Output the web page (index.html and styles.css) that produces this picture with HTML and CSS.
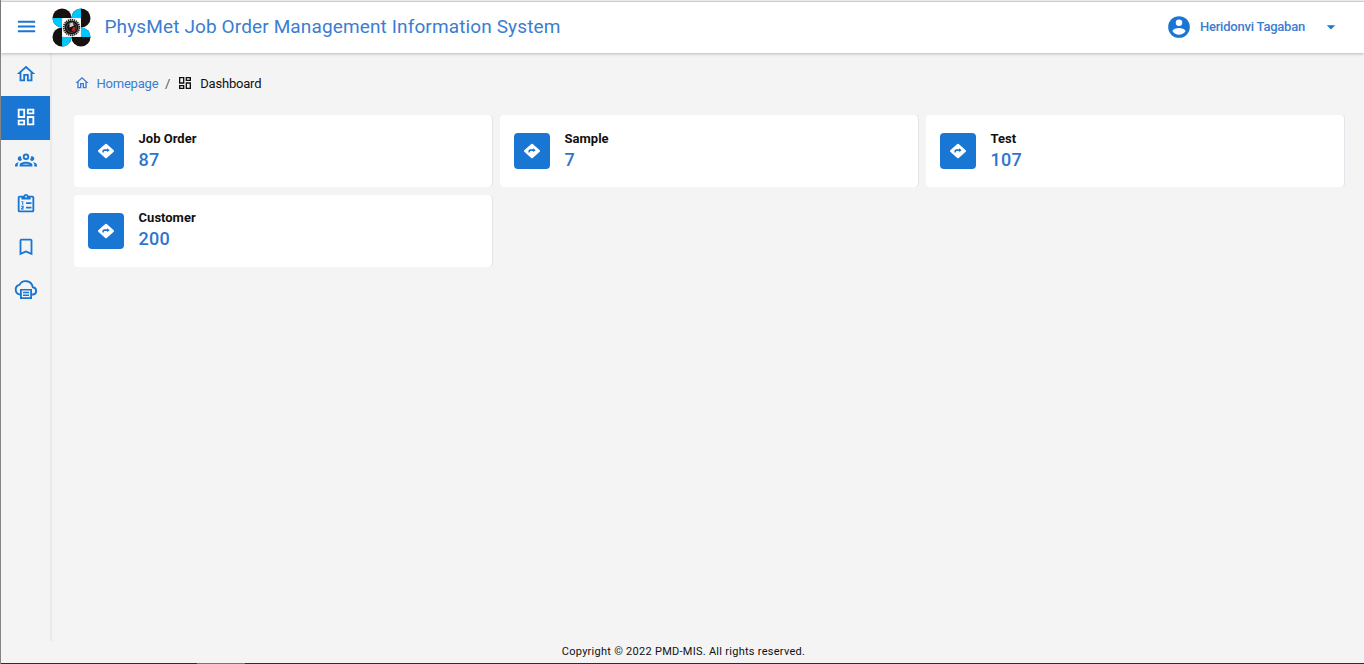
FILE: index.html
```html
<!DOCTYPE html>
<html lang="en">
<head>
<meta charset="utf-8">
<title>PhysMet Job Order Management Information System</title>
<link rel="stylesheet" href="styles.css">
</head>
<body>
<svg class="defs" aria-hidden="true">
  <symbol id="home" viewBox="0 0 24 24"><path d="M12 5.69L17 10.19V18H15V12H9V18H7V10.19L12 5.69M12 3L2 12H5V20H11V14H13V20H19V12H22"/></symbol>
  <symbol id="dash" viewBox="0 0 24 24"><path d="M19,5V7H15V5H19M9,5V11H5V5H9M19,13V19H15V13H19M9,17V19H5V17H9M21,3H13V9H21V3M11,3H3V13H11V3M21,11H13V21H21V11M11,15H3V21H11V15Z"/></symbol>
  <symbol id="go" viewBox="0 0 24 24"><path fill-rule="evenodd" d="M13.4 13.4V12H10Q9 12 9 14H7.2Q6.8 9.8 10 9.8H13.4V8.4L17 11ZM22.3 11.1L13 2.6Q12 1.8 11 2.6L1.7 11.1Q.9 12 1.7 12.9L11 21.4Q12 22.2 13 21.4L22.3 12.9Q23.1 12 22.3 11.1Z"/></symbol>
</svg>
<div class="app">
  <header class="topbar">
    <svg class="menu" viewBox="0 0 24 24"><path d="M3,6H21V8H3V6M3,11H21V13H3V11M3,16H21V18H3V16Z"/></svg>
    <svg class="logo" viewBox="0 0 40 40">
      <g fill="#17120f"><circle cx="10.3" cy="10.3" r="9.8"/><circle cx="29.7" cy="10.3" r="9.8"/><circle cx="10.3" cy="29.7" r="9.8"/><circle cx="29.7" cy="29.7" r="9.8"/></g>
      <g fill="#00c8ff"><path d="M10.3 10.3H.5A9.8 9.8 0 0 0 10.3 20.1Z"/><path d="M29.7 10.3V.5A9.8 9.8 0 0 0 19.9 10.3Z"/><path d="M29.7 29.7H39.5A9.8 9.8 0 0 0 29.7 19.9Z"/><path d="M10.3 29.7V39.5A9.8 9.8 0 0 0 20.1 29.7Z"/></g>
      <path fill="#fff" d="M10.3 10.3H29.7V29.7H10.3Z"/>
      <circle cx="20" cy="20" r="8" fill="none" stroke="#222" stroke-width="1.8" stroke-dasharray="1.4 .7"/>
      <circle cx="20" cy="20" r="7.2" fill="#17120f"/>
      <circle cx="20" cy="20" r="5" fill="none" stroke="#666" stroke-width=".7"/>
      <path fill="#ccc" d="M18 16l3-1.5 1.5 3.5-2 1-2.5 1Z"/><path fill="#c91d2b" d="M22 19l2 1-1 4-3-1Z"/>
    </svg>
    <h1 class="title">PhysMet Job Order Management Information System</h1>
    <div class="user">
      <svg class="avatar" viewBox="0 0 24 24"><path d="M12,19.2C9.5,19.2 7.29,17.92 6,16C6.03,14 10,12.9 12,12.9C14,12.9 17.97,14 18,16C16.71,17.92 14.5,19.2 12,19.2M12,5A3,3 0 0,1 15,8A3,3 0 0,1 12,11A3,3 0 0,1 9,8A3,3 0 0,1 12,5M12,2A10,10 0 1,0 22,12A10,10 0 0,0 12,2Z"/></svg>
      <span class="username">Heridonvi Tagaban</span>
      <svg class="caret" viewBox="0 0 24 24"><path d="M7,10L12,15L17,10H7Z"/></svg>
    </div>
  </header>
  <div class="body">
    <nav class="side">
      <a class="item"><svg><use href="#home"/></svg></a>
      <a class="item active"><svg><use href="#dash"/></svg></a>
      <a class="item"><svg viewBox="0 0 24 24"><path fill-rule="evenodd" d="M12 5A3.5 3.5 0 1 0 12 12A3.5 3.5 0 1 0 12 5M12 7A1.5 1.5 0 1 1 12 10A1.5 1.5 0 1 1 12 7M5.5 8A2.5 2.5 0 1 0 7.6 11.8C6.9 10.9 6.5 9.7 6.5 8.2A2.5 2.5 0 0 0 5.5 8M18.5 8A2.5 2.5 0 1 1 16.4 11.8C17.1 10.9 17.5 9.7 17.5 8.2A2.5 2.5 0 0 1 18.5 8M12 14C9.66 14 5 15.17 5 17.5V19H19V17.5C19 15.17 14.34 14 12 14M4.7 14.5C2.8 14.8 0 15.7 0 17.5V19H3V17.1C3 16.1 3.7 15.2 4.7 14.5M19.3 14.5C20.3 15.2 21 16.1 21 17.1V19H24V17.5C24 15.7 21.2 14.8 19.3 14.5M12 16C13.5 16 15.2 16.5 16.2 17H7.8C8.8 16.5 10.5 16 12 16Z"/></svg></a>
      <a class="item"><svg viewBox="0 0 24 24"><path fill-rule="evenodd" d="M19 3H14.8A3 3 0 0 0 9.2 3H5A2 2 0 0 0 3 5V19A2 2 0 0 0 5 21H19A2 2 0 0 0 21 19V5A2 2 0 0 0 19 3M12 3A1 1 0 1 1 12 5A1 1 0 1 1 12 3M5 5H7V7H17V5H19V19H5Z"/><path d="M12 10H18V12H12ZM12 15H18V17H12ZM7 9H9V13H8V10H7ZM6.5 14H9.5V16L8 17H9.5V18H6.5V17L8.5 15H6.5Z"/></svg></a>
      <a class="item"><svg viewBox="0 0 24 24"><path d="M17,18L12,15.82L7,18V5H17M17,3H7A2,2 0 0,0 5,5V21L12,18L19,21V5C19,3.89 18.1,3 17,3Z"/></svg></a>
      <a class="item"><svg class="cloud" viewBox="0 0 24 24"><path fill="none" stroke="currentColor" stroke-width="1.9" d="M7 17.5H6A4.9 4.9 0 0 1 5.4 7.9A7.2 7.2 0 0 1 18.8 10.2A3.7 3.7 0 0 1 19.2 17.5H17"/><path fill-rule="evenodd" d="M6 12H18V22H6ZM7.8 13.6V20.2H16.2V13.6ZM9 14.7H15V16.2H9ZM9 17.6H15V19H9Z"/></svg></a>
    </nav>
    <main class="main">
      <div class="crumbs">
        <svg class="cicon link"><use href="#home"/></svg><span class="link home">Homepage</span><span class="slash">/</span><svg class="cicon"><use href="#dash"/></svg><span class="here">Dashboard</span>
      </div>
      <section class="cards">
        <article class="card"><span class="badge"><svg><use href="#go"/></svg></span><div><div class="label">Job Order</div><div class="value">87</div></div></article>
        <article class="card"><span class="badge"><svg><use href="#go"/></svg></span><div><div class="label">Sample</div><div class="value">7</div></div></article>
        <article class="card"><span class="badge"><svg><use href="#go"/></svg></span><div><div class="label">Test</div><div class="value">107</div></div></article>
        <article class="card lower"><span class="badge"><svg><use href="#go"/></svg></span><div><div class="label">Customer</div><div class="value">200</div></div></article>
      </section>
    </main>
  </div>
  <footer class="footer">Copyright © 2022 PMD-MIS. All rights reserved.</footer>
  <div class="edge"></div>
</div>
</body>
</html>
```

FILE: styles.css
```css
* { box-sizing: border-box; }
body { margin: 0; background: #f4f4f4; font-family: Roboto, sans-serif; color: #111; overflow: hidden; }
svg { fill: currentColor; display: block; flex: none; }
.defs { position: absolute; width: 0; height: 0; }
.app { height: 664px; display: flex; flex-direction: column; border-left: 1px solid #858585; }
.topbar { flex: none; display: flex; align-items: center; background: #fff; border-top: 1px solid #ccc; box-shadow: 0 1px 3px rgba(0,0,0,.24); margin-top: 1px; height: 52px; padding: 0 24px 2px 14px; color: #1976d2; z-index: 1; }
.menu { width: 23px; height: 23px; }
.logo { width: 39px; height: 39px; margin-left: 14px; margin-top: 2px; }
.title { margin: 0 0 0 13.5px; font-size: 19px; font-weight: 400; letter-spacing: .13px; color: #3b7dd0; line-height: 50px; white-space: nowrap; }
.user { margin-left: auto; display: flex; align-items: center; }
.avatar { width: 26px; height: 26px; }
.username { margin-left: 8px; width: 107px; font-size: 13px; font-weight: 500; letter-spacing: -.22px; color: #3b7dd0; white-space: nowrap; }
.caret { width: 20px; height: 20px; margin-left: 14px; margin-right: -1px; }
.body { flex: 1; display: flex; min-height: 0; }
.side { width: 51px; height: 588px; border-right: 2px solid #e9e9e9; color: #1976d2; }
.item { height: 43.3px; display: flex; align-items: center; justify-content: center; padding: 0 0 2px 1px; }
.item svg { width: 22px; height: 22px; }
.item .cloud { width: 24px; height: 22px; margin-top: -2px; }
.item .cloud { height: 24px; }
.item.active { background: #1976d2; color: #fff; }
.main { flex: 1; padding: 20px 20px 0 21.6px; }
.crumbs { display: flex; align-items: center; height: 20px; font-size: 13px; letter-spacing: -.2px; }
.cicon { width: 16px; height: 16px; }
.link { color: #3b7dd0; }
.home { margin-left: 6.8px; width: 62px; }
.slash { margin: 0 7px 0 6.5px; color: #555; }
.here { margin-left: 7.2px; }
.cards { margin-top: 22px; display: grid; grid-template-columns: repeat(3, 418px); gap: 8px; }
.card { height: 72px; background: #fff; border-radius: 4px; box-shadow: 1px 0 0 #e3e3ea; display: flex; align-items: center; gap: 15px; padding-left: 14px; }
.badge { width: 36px; height: 36px; border-radius: 4px; background: #1976d2; color: #fff; display: flex; align-items: center; justify-content: center; }
.badge svg { width: 18px; height: 18px; }
.label { font-size: 13px; font-weight: 700; line-height: 18px; margin-top: -1px; }
.lower .label { margin-top: -3px; }
.value { font-size: 18px; font-weight: 500; line-height: 24px; letter-spacing: .2px; color: #2d75d0; }
.footer { height: 24px; font-size: 11px; line-height: 25px; letter-spacing: .27px; text-align: center; padding-left: 2px; }
.edge { height: 1px; flex: none; background: linear-gradient(90deg, #263032 196px, #737879 196px 244px, #263032 244px); }
```
